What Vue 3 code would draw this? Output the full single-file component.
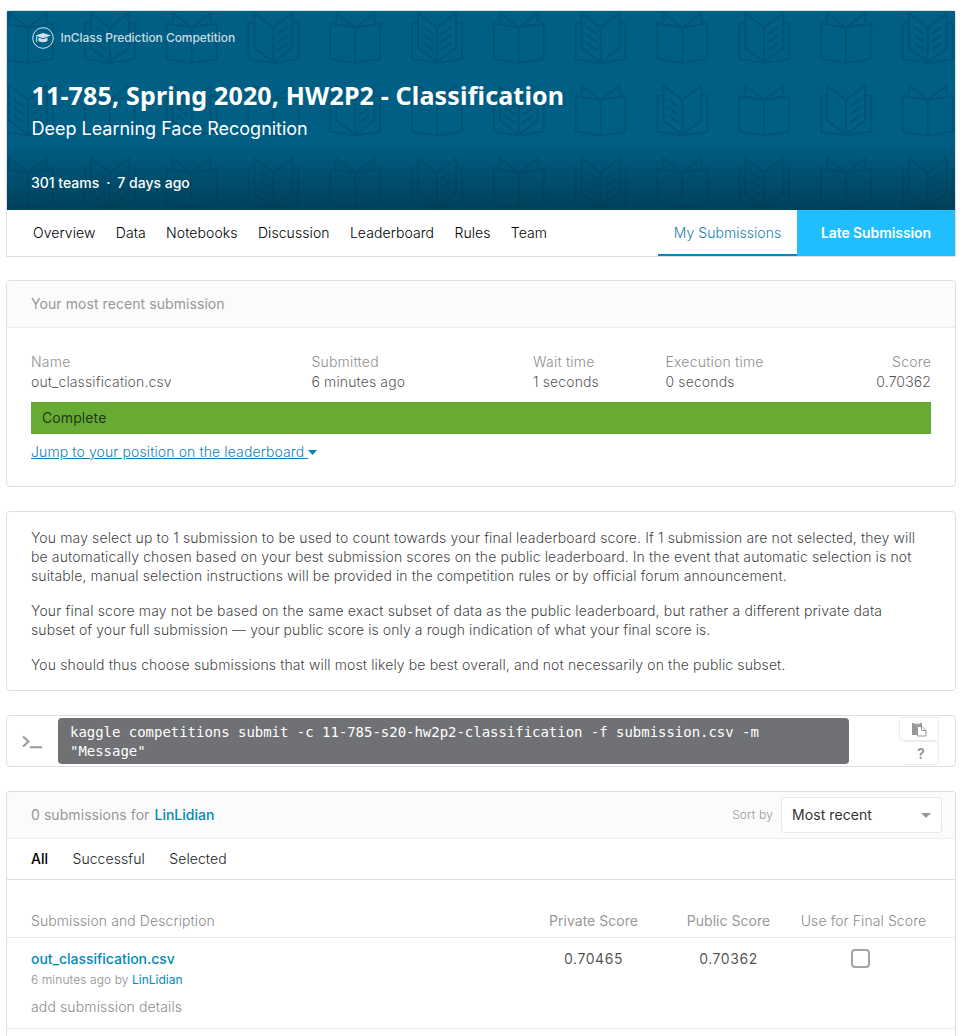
<script setup>
const types = [
  ['P', 'L', 'P', 'R', 'P', 'B', 'P', 'L', 'P', 'R', 'P', 'B'],
  ['B', 'P', 'L', 'P', 'R', 'P', 'B', 'P', 'L', 'P', 'R', 'P'],
  ['P', 'B', 'P', 'L', 'P', 'R', 'P', 'B', 'P', 'L', 'P', 'R'],
]
const books = types.flatMap((row, r) => row.map((t, c) => ({ t, x: 21 + c * 81.8, y: r * 72.6 })))
const nav = ['Overview', 'Data', 'Notebooks', 'Discussion', 'Leaderboard', 'Rules', 'Team']
const details = [
  ['Name', 'out_classification.csv'],
  ['Submitted', '6 minutes ago'],
  ['Wait time', '1 seconds'],
  ['Execution time', '0 seconds'],
  ['Score', '0.70362'],
]
</script>

<template>
  <main class="page">
    <header class="hero">
      <div class="banner">
        <svg class="pattern" width="948" height="199" viewBox="0 0 948 199">
          <g v-for="(b, i) in books" :key="i" :transform="`translate(${b.x} ${b.y})`">
            <template v-if="b.t === 'P'">
              <path d="M-25 12.500L0 16.500L25 12.500V48L0 52L-25 48ZM0 16.500V52M-19 11V2L0 16.500L19 2V11" />
            </template>
            <template v-else>
              <path d="M-19 12.500H-25V48L0 52L25 48V12.500H19M0 51L-19 37V2L0 16.500L19 2V37L0 51M0 16.500V51" />
              <path v-if="b.t !== 'R'" d="M-14 16L-4 23M-14 24L-4 31M-14 32L-4 39" />
              <path v-if="b.t !== 'L'" d="M14 16L4 23M14 24L4 31M14 32L4 39" />
            </template>
          </g>
        </svg>
        <div class="hero-text">
          <div class="kind">
            <svg width="22" height="22" viewBox="0 0 22 22">
              <circle cx="11" cy="11" r="10.300" fill="none" stroke="#d3e2e9" />
              <path d="M3.500 8.500L11 6l8 2.500L11 11.300zM6.500 10.500L11 12.200l4.500-1.700v3.500Q11 16.500 6.500 14z" fill="#d3e2e9" />
              <path d="M4.700 9v6" stroke="#d3e2e9" />
            </svg>
            <span>InClass Prediction Competition</span>
          </div>
          <h1>11-785, Spring 2020, HW2P2 - Classification</h1>
          <h2>Deep Learning Face Recognition</h2>
          <p class="meta"><span>301 teams</span><i>·</i><span>7 days ago</span></p>
        </div>
      </div>
      <nav class="nav">
        <a v-for="n in nav" :key="n">{{ n }}</a>
        <a class="mine">My Submissions</a>
        <a class="late">Late Submission</a>
      </nav>
    </header>

    <section class="card recent">
      <div class="head">Your most recent submission</div>
      <div class="details">
        <div v-for="d in details" :key="d[0]"><span class="label">{{ d[0] }}</span><span>{{ d[1] }}</span></div>
      </div>
      <div class="status">Complete</div>
      <a class="jump">Jump to your position on the leaderboard&nbsp;<svg width="9" height="5" viewBox="0 0 9 5"><path d="M0 0h9L4.500 5z" fill="#008abc" /></svg></a>
    </section>

    <section class="card info">
      <p><span>You may select up to 1 submission to be used to count towards your final leaderboard score. If 1 submission are not selected, they will</span><br><span>be automatically chosen based on your best submission scores on the public leaderboard. In the event that automatic selection is not</span><br><span>suitable, manual selection instructions will be provided in the competition rules or by official forum announcement.</span></p>
      <p><span class="wide">Your final score may not be based on the same exact subset of data as the public leaderboard, but rather a different private data</span><br><span class="tight">subset of your full submission — your public score is only a rough indication of what your final score is.</span></p>
      <p><span>You should thus choose submissions that will most likely be best overall, and not necessarily on the public subset.</span></p>
    </section>

    <section class="card api">
      <svg class="prompt" width="20" height="14" viewBox="0 0 20 14"><path d="M1 1.500L6.500 6.500L1 11.500M8 12.200H20" fill="none" stroke="#96989a" stroke-width="2" /></svg>
      <code>kaggle competitions submit -c 11-785-s20-hw2p2-classification -f submission.csv -m<br>"Message"</code>
      <div class="tools">
        <button class="copy">
          <svg width="15" height="15" viewBox="0 0 15 15"><path d="M0 1h10v3H5v9H0z" fill="#96989a" /><path d="M2 1.700h6" stroke="#fff" stroke-width=".8" /><path d="M5.500 4.500h4.500l4 4v5.500H5.500zM9.500 4.500v4h4.500" fill="#fff" stroke="#96989a" /></svg>
        </button>
        <button class="help">?</button>
      </div>
    </section>

    <section class="card list">
      <div class="head list-head">
        <span>0 submissions for</span><a>LinLidian</a>
        <span class="sort">Sort by</span>
        <div class="select"><span>Most recent</span><svg width="10" height="5" viewBox="0 0 10 5"><path d="M0 0h10L5 5z" fill="#96989a" /></svg></div>
      </div>
      <div class="tabs"><b>All</b><span>Successful</span><span>Selected</span></div>
      <div class="row cols">
        <span>Submission and Description</span><span class="m">Private Score</span><span class="m">Public Score</span><span>Use for Final Score</span>
      </div>
      <div class="row entry">
        <div class="file">
          <a>out_classification.csv</a>
          <small>6 minutes ago by <em>LinLidian</em></small>
          <span>add submission details</span>
        </div>
        <span class="num">0.70465</span><span class="num">0.70362</span><i class="check"></i>
      </div>
    </section>
  </main>
</template>

<style>
body { background: #fff; overflow: hidden; }
</style>
<style scoped>
* { box-sizing: border-box; }
.page { width: 950px; height: 1036px; overflow: hidden; margin-left: 6px; padding-top: 10px; font: 400 14px/20px Inter, sans-serif; color: rgba(0, 0, 0, .7); white-space: nowrap; }
.hero { height: 247px; border: 1px solid #dedfe0; border-radius: 4px 4px 0 0; }
.banner { height: 199px; position: relative; background: linear-gradient(#005f85 0, #005f85 65%, #00415b 100%); }
.pattern { position: absolute; inset: 0; }
.pattern path { fill: none; stroke: rgba(0, 45, 70, .21); stroke-width: 2; }
.hero-text { position: relative; padding: 15px 24px 0 24.500px; color: #fff; }
.kind { display: flex; align-items: center; gap: 7px; height: 23px; font-size: 12px; font-weight: 500; color: #c8dbe3; letter-spacing: -.06px; }
h1 { margin: 30px 0 0; font: 700 25px/33px "Noto Sans", sans-serif; letter-spacing: .17px; }
h2 { margin: 5px 0 0; font-size: 18px; line-height: 24px; font-weight: 400; letter-spacing: -.01px; }
.meta { margin: 32px 0 0 -.5px; line-height: 20px; font-weight: 450; display: flex; }
.meta i { width: 18px; text-align: center; font-style: normal; }
.nav { height: 46px; display: flex; align-items: center; gap: 20.300px; padding-left: 26px; color: #000; font-weight: 350; letter-spacing: .08px; }
.mine { height: 46px; width: 139px; margin-left: auto; margin-right: -20.300px; border-bottom: 2px solid #008abc; text-align: center; line-height: 46px; letter-spacing: .04px; }
.late { height: 46px; width: 158px; background: #20beff; font-weight: 600; text-align: center; line-height: 46px; letter-spacing: -.1px; }
.card { border: 1px solid #dedfe0; border-radius: 4px; margin-top: 24px; }
.head { height: 47px; padding: 0 24px; background: #fbfbfb; border-bottom: 1px solid #ececec; border-radius: 4px 4px 0 0; line-height: 46px; color: #95989a; letter-spacing: .07px; }
.recent { height: 207px; margin-top: 23px; }
.details { display: grid; grid-template-columns: 280.500px 221.500px 132.500px 1fr auto; padding: 24px 24px 0; font-weight: 350; letter-spacing: .12px; }
.details span { display: block; }
.details div:last-child { text-align: right; }
.label { color: #8f8f8f; letter-spacing: .2px; }
.status { margin: 10px 24px 8px; height: 32px; padding-left: 11px; background: #67ab35; line-height: 32px; letter-spacing: .1px; }
.jump { margin-left: 24px; color: #1880b4; text-decoration: underline; font-weight: 300; letter-spacing: .11px; }
.jump svg { vertical-align: 2px; }
.info { height: 180px; padding: 16px 24px 0; line-height: 19px; font-weight: 300; letter-spacing: .12px; color: rgba(0, 0, 0, .78); }
.info p { margin: 0 0 16px; }
.info .wide { letter-spacing: .153px; }
.info .tight { letter-spacing: .08px; }
.api { height: 52px; display: flex; align-items: center; padding-left: 15px; }
.prompt { margin-right: 16px; margin-top: 2px; }
code { width: 791px; height: 46px; padding: 5px 12px; border-radius: 4px; background: #707175; color: #fff; font: 400 14px/19px "DejaVu Sans Mono", monospace; letter-spacing: -.028px; }
.tools { margin-left: 50px; width: 40px; display: grid; gap: 0; }
.tools button { height: 24px; padding: 0; border: 1px solid #ececec; border-radius: 4px; background: #fff; color: #96989a; font: 700 14px Inter, sans-serif; display: grid; place-items: center; }
.tools .copy { border-radius: 4px 0 0 4px; }
.tools .help { border-left: 0; margin-left: 5px; border-radius: 0 4px 4px 0; }
.list { height: 260px; border-bottom: 0; }
.list-head { display: flex; align-items: center; padding-right: 13px; }
a { color: #008abc; }
.nav a { color: inherit; }
.nav .mine { color: #2280b4; }
.nav .late { color: #fff; }
.list-head a { font-weight: 500; margin-left: 5px; letter-spacing: 0; }
.sort { margin-left: auto; margin-right: 8px; font-size: 12px; font-weight: 300; letter-spacing: .15px; }
.select { width: 161px; height: 36px; padding: 0 10px; display: flex; align-items: center; justify-content: space-between; background: #fff; border: 1px solid #e8e8e8; border-radius: 3px; color: #333; }
.tabs { height: 41px; display: flex; gap: 24.500px; padding-left: 24px; border-bottom: 1px solid #dedfe0; line-height: 40px; font-weight: 300; letter-spacing: .07px; color: #222; }
.tabs b { color: #000; font-weight: 500; letter-spacing: 0; }
.row { display: grid; grid-template-columns: 495px 135px 135px 135px; padding-left: 24px; }
.cols { height: 58px; padding-top: 31px; color: #8c8c8c; border-bottom: 1px solid #ececec; font-weight: 300; letter-spacing: .09px; }
.cols > *:not(:first-child), .num { text-align: center; }
.cols .m { font-weight: 400; color: #999; letter-spacing: .03px; }
.num { letter-spacing: .55px; }
.entry { height: 91px; padding-top: 11px; border-bottom: 1px solid #ececec; }
.file { display: flex; flex-direction: column; }
.file a { font-weight: 450; letter-spacing: -.03px; }
.file small { font-size: 12px; line-height: 22px; color: #8c8c8c; font-weight: 300; letter-spacing: .1px; }
.file em { font-style: normal; font-weight: 400; color: #008abc; letter-spacing: 0; }
.file span { margin-top: 6px; color: #8c8c8c; font-weight: 300; letter-spacing: .13px; }
.check { width: 19px; height: 19px; border: 2px solid #a4a4a4; border-radius: 4px; margin: 0 0 0 55px; }
</style>
